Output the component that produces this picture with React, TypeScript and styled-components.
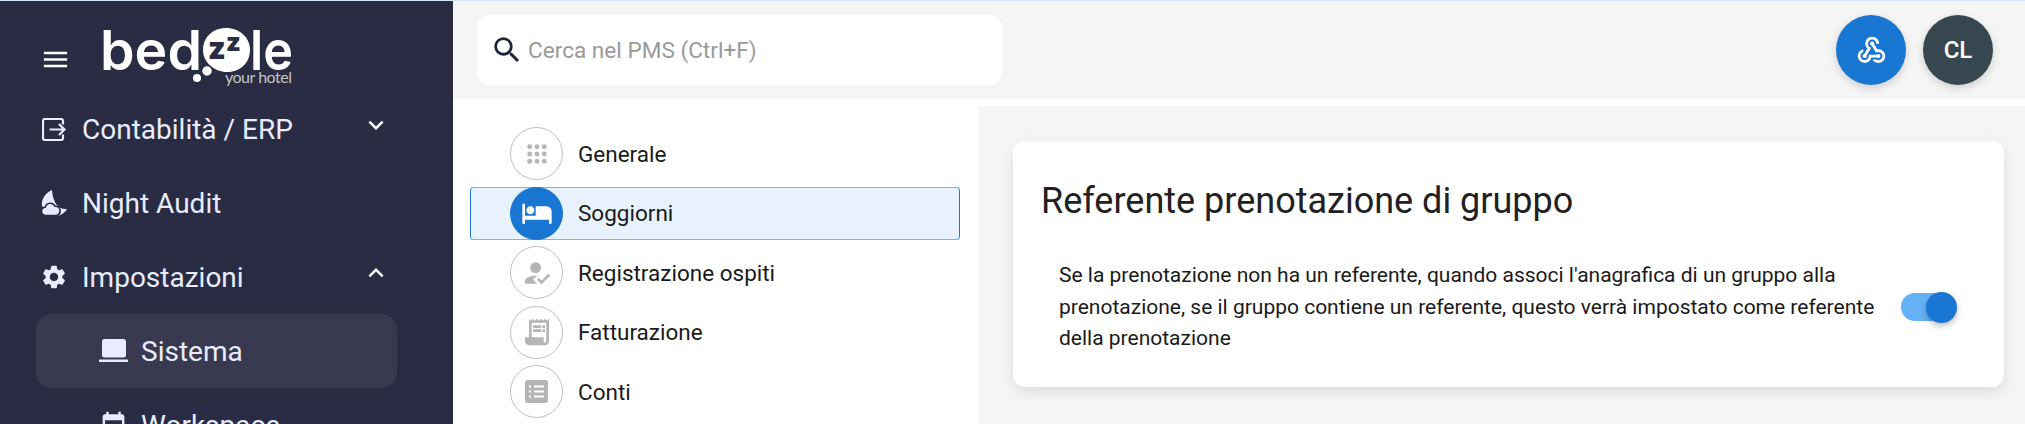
import React from 'react';
import styled, { createGlobalStyle } from 'styled-components';
import {
  MdExpandLess,
  MdExpandMore,
  MdHotel,
  MdHowToReg,
  MdMenu,
  MdReceiptLong,
  MdSearch,
  MdSettings,
  MdEvent,
  MdWebhook,
} from 'react-icons/md';

const GlobalStyle = createGlobalStyle`
  html, body {
    margin: 0;
    height: 100%;
    overflow: hidden;
    background: #ffffff;
  }
  body {
    font-family: Roboto, "Liberation Sans", sans-serif;
  }
`;

const Page = styled.div`
  display: flex;
  height: 424px;
  width: 2025px;
  box-sizing: border-box;
  border-top: 1px solid #d5e4fd;
  overflow: hidden;
`;

const Sidebar = styled.aside`
  width: 453px;
  flex: none;
  background: #292c43;
  color: #e8ecfe;
  overflow: hidden;
`;

const Brand = styled.div`
  display: flex;
  align-items: flex-start;
  height: 91px;
  box-sizing: border-box;
  padding: 25px 0 0 40px;
  gap: 32px;
`;

const Burger = styled.span`
  display: flex;
  margin-top: 18px;
  color: #ffffff;
  font-size: 31px;
`;

const LogoArt = styled.svg`
  display: block;
  overflow: visible;
  flex: none;
`;

const NavList = styled.nav`
  display: flex;
  flex-direction: column;
`;

const NavRow = styled.div<{ $nested?: boolean; $active?: boolean }>`
  display: flex;
  align-items: center;
  height: 74px;
  margin-left: 36px;
  width: 361px;
  box-sizing: border-box;
  padding-left: ${(p) => (p.$nested ? 63 : 4)}px;
  gap: ${(p) => (p.$nested ? 13 : 14)}px;
  border-radius: 16px;
  background: ${(p) => (p.$active ? '#393a50' : 'transparent')};
  font-size: 28px;
  position: relative;
  flex: none;
`;

const NavIcon = styled.span<{ $nested?: boolean }>`
  display: flex;
  width: ${(p) => (p.$nested ? 29 : 28)}px;
  justify-content: center;
  font-size: 32px;
  flex: none;
`;

const NavChevron = styled.span`
  position: absolute;
  right: 6px;
  top: 18px;
  display: flex;
  font-size: 30px;
  color: #ffffff;
`;

const Main = styled.main`
  flex: 1;
  display: flex;
  flex-direction: column;
  min-width: 0;
`;

const TopBar = styled.header`
  height: 98px;
  flex: none;
  background: #f5f5f5;
  display: flex;
  align-items: center;
  justify-content: space-between;
  padding: 0 32px 0 24px;
`;

const SearchBox = styled.div`
  width: 525px;
  height: 70px;
  box-sizing: border-box;
  background: #ffffff;
  border-radius: 13px;
  display: flex;
  align-items: center;
  padding-left: 13px;
  gap: 4px;
  color: #9a9a9a;
  font-size: 22.6px;
`;

const SearchIcon = styled.span`
  display: flex;
  color: #1c2536;
  font-size: 34px;
`;

const TopActions = styled.div`
  display: flex;
  gap: 17px;
`;

const RoundButton = styled.div<{ $bg: string }>`
  width: 70px;
  height: 70px;
  border-radius: 50%;
  background: ${(p) => p.$bg};
  color: #ffffff;
  display: flex;
  align-items: center;
  justify-content: center;
  font-size: 24px;
  font-weight: 500;
  box-shadow: 0 3px 8px rgba(0, 0, 0, 0.16);
`;

const Content = styled.div`
  flex: 1;
  display: flex;
  padding-top: 7px;
  min-height: 0;
`;

const SectionList = styled.div`
  width: 525px;
  flex: none;
  box-sizing: border-box;
  padding: 21px 18px 0 17px;
  display: flex;
  flex-direction: column;
  gap: 6.5px;
  overflow: hidden;
`;

const SectionRow = styled.div<{ $active?: boolean }>`
  display: flex;
  align-items: center;
  height: 53px;
  flex: none;
  padding: 0 0 0 40px;
  gap: 15px;
  font-size: 22.5px;
  color: #1a1a1a;
  border-radius: 4px;
  ${(p) =>
    p.$active
      ? `background: #e7f2fd;
         box-shadow: inset 0 1px 0 #7db5ec, inset 0 -1px 0 #7db5ec, inset 1px 0 0 #1976d2, inset -1px 0 0 #1976d2;`
      : ''}
`;

const SectionBadge = styled.span<{ $active?: boolean }>`
  width: 53px;
  height: 53px;
  border-radius: 50%;
  box-sizing: border-box;
  border: 1px solid ${(p) => (p.$active ? '#1976d2' : '#bdbdbd')};
  background: ${(p) => (p.$active ? '#1976d2' : '#ffffff')};
  color: ${(p) => (p.$active ? '#ffffff' : '#b5b5b5')};
  display: flex;
  align-items: center;
  justify-content: center;
  font-size: 32px;
  flex: none;
`;

const Detail = styled.div`
  flex: 1;
  background: #f5f5f5;
  padding: 35px 21px 0 35px;
  min-width: 0;
`;

const Card = styled.section`
  background: #ffffff;
  border-radius: 12px;
  height: 246px;
  box-sizing: border-box;
  padding: 38px 51px 0 28px;
  box-shadow: 0 5px 14px rgba(0, 0, 0, 0.1);
`;

const CardTitle = styled.h2`
  margin: 0;
  font-size: 36px;
  font-weight: 400;
  line-height: 44px;
  color: #212121;
`;

const OptionRow = styled.div`
  display: flex;
  align-items: center;
  justify-content: space-between;
  margin-top: 37px;
  padding-left: 18px;
`;

const OptionText = styled.p`
  margin: 0;
  width: 835px;
  font-size: 21px;
  line-height: 31.5px;
  color: #1a1a1a;
`;

const Toggle = styled.span`
  position: relative;
  display: block;
  width: 52px;
  height: 28px;
  border-radius: 14px;
  background: #64b1f6;
  flex: none;
`;

const ToggleKnob = styled.span`
  position: absolute;
  right: -4px;
  top: -1.5px;
  width: 31px;
  height: 31px;
  border-radius: 50%;
  background: #1976d2;
  box-shadow: 0 3px 6px rgba(0, 0, 0, 0.25);
`;

function Logo() {
  return (
    <LogoArt width="190" height="62" viewBox="0 0 190 62">
      <text x="-3" y="44" fontFamily="Inter, sans-serif" fontWeight="600" fontSize="55" fill="#ffffff" textLength="102" lengthAdjust="spacingAndGlyphs">bed</text>
      <path d="M123 2 C136 2 147 11 147 24 C147 36 138 46 124 46 C111 46 100 36 100 24 C100 11 110 2 123 2z" fill="#ffffff" />
      <text x="105" y="33" fontFamily="Inter, sans-serif" fontWeight="900" fontSize="30" fill="#292c43">z</text>
      <text x="123" y="25" fontFamily="Inter, sans-serif" fontWeight="900" fontSize="25" fill="#292c43">z</text>
      <circle cx="104" cy="45" r="5.5" fill="#ffffff" stroke="#292c43" strokeWidth="1.5" />
      <circle cx="94" cy="52" r="4" fill="#ffffff" />
      <text x="147" y="44" fontFamily="Inter, sans-serif" fontWeight="600" fontSize="55" fill="#ffffff" textLength="43" lengthAdjust="spacingAndGlyphs">le</text>
      <text x="122" y="57" fontFamily="Lato, sans-serif" fontSize="16" fill="#c4c4c4" textLength="67">your hotel</text>
    </LogoArt>
  );
}

function ExportIcon() {
  return (
    <svg width="24" height="23" viewBox="0 0 24 23" fill="none" stroke="currentColor" strokeWidth="2.2">
      <path d="M21 6.5 V3 a2 2 0 0 0 -2 -2 H3 a2 2 0 0 0 -2 2 V20 a2 2 0 0 0 2 2 H19 a2 2 0 0 0 2 -2 V16.5" />
      <path d="M7.5 11.5 H22.5 M17 6 L22.5 11.5 L17 17" />
    </svg>
  );
}

function NightIcon() {
  return (
    <svg width="26" height="26" viewBox="0 0 26 26" fill="currentColor">
      <path d="M11 0 C4 3 0 10 1 16 L12 25 C18 27 23 24 26 19 C19 20 12 15 11 0z" />
      <path d="M5 25.5 a4.2 4.2 0 0 1 -.7 -8.4 a5.2 5.2 0 0 1 9.8 -.8 a4.7 4.7 0 0 1 1.6 9.2z" stroke="#292c43" strokeWidth="1.6" />
    </svg>
  );
}

function LaptopIcon() {
  return (
    <svg width="29" height="24" viewBox="0 0 29 24" fill="currentColor">
      <rect x="3" y="0" width="24" height="18.5" rx="2.5" />
      <rect x="0" y="20.5" width="29" height="2.6" rx="0.5" />
    </svg>
  );
}

function DotGrid() {
  const dots = [0, 1, 2].flatMap((r) => [0, 1, 2].map((c) => [c, r]));
  return (
    <svg width="20" height="20" viewBox="0 0 22 22" fill="currentColor">
      {dots.map(([c, r]) => (
        <circle key={`${c}-${r}`} cx={3 + c * 8} cy={3 + r * 8} r="2.7" />
      ))}
    </svg>
  );
}

function ListBoxIcon() {
  return (
    <svg width="23" height="23" viewBox="0 0 23 23">
      <rect width="23" height="23" rx="2.5" fill="currentColor" />
      <path d="M9 6.5 H19 M9 11.5 H19 M9 16.5 H19" stroke="#ffffff" strokeWidth="1.8" />
      <path d="M4 6.5 H6 M4 11.5 H6 M4 16.5 H6" stroke="#ffffff" strokeWidth="1.8" />
    </svg>
  );
}

const sections = [
  { label: 'Generale', icon: <DotGrid /> },
  { label: 'Soggiorni', icon: <MdHotel />, active: true },
  { label: 'Registrazione ospiti', icon: <MdHowToReg /> },
  { label: 'Fatturazione', icon: <MdReceiptLong /> },
  { label: 'Conti', icon: <ListBoxIcon /> },
];

export default function App() {
  return (
    <Page>
      <GlobalStyle />
      <Sidebar>
        <Brand>
          <Burger>
            <MdMenu />
          </Burger>
          <Logo />
        </Brand>
        <NavList>
          <NavRow>
            <NavIcon><ExportIcon /></NavIcon>
            Contabilità / ERP
            <NavChevron><MdExpandMore /></NavChevron>
          </NavRow>
          <NavRow>
            <NavIcon><NightIcon /></NavIcon>
            Night Audit
          </NavRow>
          <NavRow>
            <NavIcon><MdSettings /></NavIcon>
            Impostazioni
            <NavChevron><MdExpandLess /></NavChevron>
          </NavRow>
          <NavRow $nested $active>
            <NavIcon $nested><LaptopIcon /></NavIcon>
            Sistema
          </NavRow>
          <NavRow $nested>
            <NavIcon $nested><MdEvent size={30} /></NavIcon>
            Workspace
          </NavRow>
        </NavList>
      </Sidebar>
      <Main>
        <TopBar>
          <SearchBox>
            <SearchIcon><MdSearch /></SearchIcon>
            Cerca nel PMS (Ctrl+F)
          </SearchBox>
          <TopActions>
            <RoundButton $bg="#1976d2"><MdWebhook size={33} /></RoundButton>
            <RoundButton $bg="#37474f">CL</RoundButton>
          </TopActions>
        </TopBar>
        <Content>
          <SectionList>
            {sections.map((s) => (
              <SectionRow key={s.label} $active={s.active}>
                <SectionBadge $active={s.active}>{s.icon}</SectionBadge>
                {s.label}
              </SectionRow>
            ))}
          </SectionList>
          <Detail>
            <Card>
              <CardTitle>Referente prenotazione di gruppo</CardTitle>
              <OptionRow>
                <OptionText>
                  Se la prenotazione non ha un referente, quando associ l'anagrafica di un gruppo alla prenotazione, se il gruppo contiene un referente, questo verrà impostato come referente della prenotazione
                </OptionText>
                <Toggle><ToggleKnob /></Toggle>
              </OptionRow>
            </Card>
          </Detail>
        </Content>
      </Main>
    </Page>
  );
}
